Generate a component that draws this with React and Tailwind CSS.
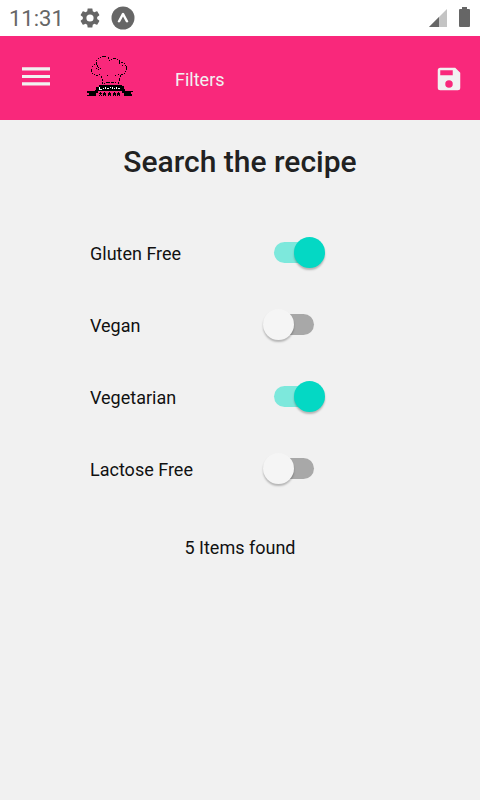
import { useState } from "react";

const filters = [
  { id: "gluten", label: "Gluten Free", on: true },
  { id: "vegan", label: "Vegan", on: false },
  { id: "vegetarian", label: "Vegetarian", on: true },
  { id: "lactose", label: "Lactose Free", on: false },
];

function StatusBar() {
  return (
    <div className="flex h-9 items-center bg-white pl-[9px] pr-[10px] text-[#666666]">
      <span className="pt-px text-[22px] leading-9">11:31</span>
      <svg className="ml-[14px] size-6" viewBox="0 0 24 24" fill="currentColor" aria-hidden="true">
        <path d="M19.14 12.94c.04-.3.06-.61.06-.94s-.02-.64-.07-.94l2.03-1.58c.18-.14.23-.41.12-.61l-1.92-3.32c-.12-.22-.37-.29-.59-.22l-2.39.96c-.5-.38-1.03-.7-1.62-.94l-.36-2.54c-.04-.24-.24-.41-.48-.41h-3.84c-.24 0-.43.17-.47.41l-.36 2.54c-.59.24-1.13.57-1.62.94l-2.39-.96c-.22-.08-.47 0-.59.22L2.74 8.87c-.12.21-.08.47.12.61l2.03 1.58c-.05.3-.09.63-.09.94s.02.64.07.94l-2.03 1.58c-.18.14-.23.41-.12.61l1.92 3.32c.12.22.37.29.59.22l2.39-.96c.5.38 1.03.7 1.62.94l.36 2.54c.05.24.24.41.48.41h3.84c.24 0 .44-.17.47-.41l.36-2.54c.59-.24 1.13-.56 1.62-.94l2.39.96c.22.08.47 0 .59-.22l1.92-3.32c.12-.22.07-.47-.12-.61zM12 15.6A3.6 3.6 0 1 1 12 8.4a3.6 3.6 0 0 1 0 7.2z" />
      </svg>
      <svg className="ml-[9px] size-6" viewBox="0 0 24 24" aria-hidden="true">
        <circle cx="12" cy="12" r="11.5" fill="currentColor" />
        <path d="M11 7.2q1-1 2 0l4.4 8.2q-1.2 2-2.6.4L12 10.6l-2.8 5.2q-1.4 1.6-2.6-.4z" fill="#fff" />
      </svg>
      <svg className="ml-auto h-[18px] w-[18px]" viewBox="0 0 18 18" aria-hidden="true">
        <path d="M0 18 18 0v18z" fill="#c4c4c4" />
        <path d="M0 18 10 8v10z" fill="currentColor" />
      </svg>
      <svg className="mb-[2px] ml-3 h-5 w-[11px]" viewBox="0 0 11 20" fill="currentColor" aria-hidden="true">
        <path d="M3 0h5v2h2q1 0 1 1v16q0 1-1 1H1q-1 0-1-1V3q0-1 1-1h2z" />
      </svg>
    </div>
  );
}

function ChefLogo() {
  return (
    <svg className="h-14 w-[60px]" viewBox="0 2 60 56" shapeRendering="crispEdges" role="img" aria-label="Chef hat logo">
      <path d="M22 8h4v1h-4zM20 9h1v1h-1zM18 10h1v1h-1zM28 9h1v2h-1zM16 12h1v1h-1zM16 14h1v3h-1zM14 16h1v1h-1zM12 18h1v1h-1zM11 21h1v3h-1zM12 25h1v1h-1zM14 26h1v1h-1zM16 27h2v1h-2zM19 26h1v1h-1zM17 17h1v2h-1zM18 19h1v1h-1zM20 20h1v1h-1zM16 20h1v1h-1zM18 21h1v1h-1z" />
      <path d="M29 12h1v1h-1zM31 11h1v1h-1zM33 10h3v1h-3zM37 11h1v1h-1zM39 12h1v4h-1zM41 14h2v1h-2zM44 15h1v1h-1zM45 17h1v1h-1zM46 18h1v4h-1zM45 23h1v1h-1zM44 25h1v1h-1zM41 26h2v1h-2zM38 26h1v1h-1zM42 17h1v1h-1zM35 27h1v1h-1zM27 27h1v1h-1z" />
      <path d="M21 28h1v2h-1zM22 31h1v2h-1zM22 34h1v2h-1zM40 27h1v2h-1zM39 30h1v3h-1zM38 34h1v2h-1zM26 34h4v1h-4zM31 34h3v1h-3zM35 34h1v1h-1zM24 35h1v1h-1z" />
      <path d="M19 37h23v1h2v3h1v2h8v1h-2v2h1v2h-8v-3h-2v-2H18v2h-2v3H7v-1h2v-2H7v-2h8v-1h1v-3h3z" />
      <path d="M19 39h1v2h2v1h-3zM23 40h1v1h-1zM25 39h1v2h-1zM27 40h2v1h-2zM30 39h1v1h-1zM32 39h1v2h-1zM34 40h1v1h-1zM36 39h1v2h-1zM38 40h2v1h-2z" fill="#fff" />
      <path d="M20 44h1v1h1v1h-1v1h1v1h-1v-1h-1v1h-1v-1h1v-1h-1v-1h1zM24 44h1v1h1v3h-1v-1h-1v1h-1v-3h1zM29 44h1v1h1v3h-1v-1h-1v1h-1v-3h1zM34 44h1v1h1v3h-1v-1h-1v1h-1v-3h1zM38 44h1v1h1v3h-1v-1h-1v1h-1v-3h1z" />
    </svg>
  );
}

function Header() {
  return (
    <header className="flex h-[84px] items-center bg-[#f9287b] px-4 text-[#f1f1f1]">
      <button type="button" aria-label="Open menu" className="flex size-10 items-center justify-center">
        <svg className="h-7 w-7" viewBox="0 0 28 28" fill="currentColor" aria-hidden="true">
          <path d="M0 3.2h28v3.3H0zM0 11h28v3H0zM0 18.3h28v3.3H0z" />
        </svg>
      </button>
      <div className="ml-6">
        <ChefLogo />
      </div>
      <h1 className="ml-[35px] pt-1 text-lg">Filters</h1>
      <button type="button" aria-label="Save filters" className="ml-auto pt-px">
        <svg className="size-[30px]" viewBox="0 0 24 24" fill="currentColor" aria-hidden="true">
          <path d="M17 3H5a2 2 0 0 0-2 2v14a2 2 0 0 0 2 2h14a2 2 0 0 0 2-2V7zm-5 16a3 3 0 1 1 0-6 3 3 0 0 1 0 6zm3-10H5V5h10z" />
        </svg>
      </button>
    </header>
  );
}

function FilterRow({ id, label, on, onChange }) {
  return (
    <div className="flex h-[72px] items-center justify-between">
      <label htmlFor={id} className="pt-1 text-lg">{label}</label>
      <input
        id={id}
        type="checkbox"
        role="switch"
        checked={on}
        onChange={onChange}
        className="relative h-[31px] w-[62px] appearance-none before:absolute before:left-[11px] before:top-[5px] before:h-[21px] before:w-10 before:rounded-full before:bg-[#a8a8a8] after:absolute after:left-0 after:top-0 after:size-[31px] after:rounded-full after:bg-[#f5f5f5] after:shadow-[0_2px_2px_rgba(0,0,0,0.25)] checked:before:bg-[#7de8dc] checked:after:left-[31px] checked:after:bg-[#04d8c4]"
      />
    </div>
  );
}

export default function App() {
  const [items, setItems] = useState(filters);
  const toggle = (id) =>
    setItems(items.map((f) => (f.id === id ? { ...f, on: !f.on } : f)));

  return (
    <div className="min-h-screen bg-[#f1f1f1] font-['Roboto',sans-serif] text-[#111111]">
      <StatusBar />
      <Header />
      <main className="pt-5">
        <h2 className="text-center text-[30px] font-medium leading-[44px] text-[#212121]">Search the recipe</h2>
        <div className="mx-auto mt-8 w-[300px]">
          <div className="w-[235px]">
            {items.map((f) => (
              <FilterRow key={f.id} {...f} onChange={() => toggle(f.id)} />
            ))}
          </div>
        </div>
        <p className="mt-[30px] text-center text-lg">5 Items found</p>
      </main>
    </div>
  );
}
